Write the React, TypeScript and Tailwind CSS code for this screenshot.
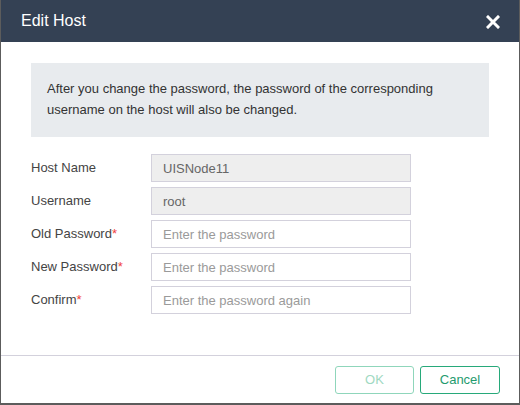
import React from 'react';

const font = { fontFamily: '"Liberation Sans", Arial, sans-serif' };

function Field({ label, required, value, placeholder, disabled }: { label: string; required?: boolean; value?: string; placeholder?: string; disabled?: boolean }) {
  return (
    <div className="flex items-center h-[28px]">
      <label className="w-[120px] text-[13px] text-[#444]">
        {label}
        {required && <span className="text-[#f0413c]">*</span>}
      </label>
      <input
        readOnly
        disabled={disabled}
        value={value ?? ''}
        placeholder={placeholder}
        style={font}
        className={`w-[260px] h-[28px] px-[11px] text-[13px] border border-[#d3d1dc] outline-none placeholder:text-[#9a9a9a] ${disabled ? 'bg-[#eeeeee] text-[#666]' : 'bg-white text-[#333]'}`}
      />
    </div>
  );
}

export default function App() {
  return (
    <div style={font} className="w-[520px] h-[405px] flex flex-col bg-white border-l border-r border-b-2 border-[#5c5c5c] overflow-hidden">
      {/* Header */}
      <div className="h-[42px] shrink-0 bg-[#344154] flex items-center justify-between pl-[20px] pr-[19px]">
        <h1 className="text-white text-[16px]">Edit Host</h1>
        <svg width="14" height="14" viewBox="0 0 14 14" className="mt-[1px]">
          <path d="M2 2 L12 12 M12 2 L2 12" stroke="white" strokeWidth="3" strokeLinecap="square" />
        </svg>
      </div>

      {/* Body */}
      <div className="flex-1 px-[30px] pt-[21px]">
        <div className="bg-[#e8ebee] h-[74px] px-[16px] pt-[15px] text-[13px] leading-[21px] text-[#333]">
          After you change the password, the password of the corresponding
          <br />
          username on the host will also be changed.
        </div>
        <div className="flex flex-col gap-[5px] mt-[17px]">
          <Field label="Host Name" value="UISNode11" disabled />
          <Field label="Username" value="root" disabled />
          <Field label="Old Password" required placeholder="Enter the password" />
          <Field label="New Password" required placeholder="Enter the password" />
          <Field label="Confirm" required placeholder="Enter the password again" />
        </div>
      </div>

      {/* Footer */}
      <div className="shrink-0 h-[48px] border-t border-[#d3d1dc] flex items-start justify-end gap-[6px] pt-[10px] pr-[19px]">
        <button disabled style={font} className="w-[79px] h-[28px] rounded-[3px] border border-[#8fd6bb] text-[#9fd9c2] text-[13px] bg-white">
          OK
        </button>
        <button style={font} className="w-[80px] h-[28px] rounded-[3px] border border-[#27a97a] text-[#1f9b6e] text-[13px] bg-white">
          Cancel
        </button>
      </div>
    </div>
  );
}
